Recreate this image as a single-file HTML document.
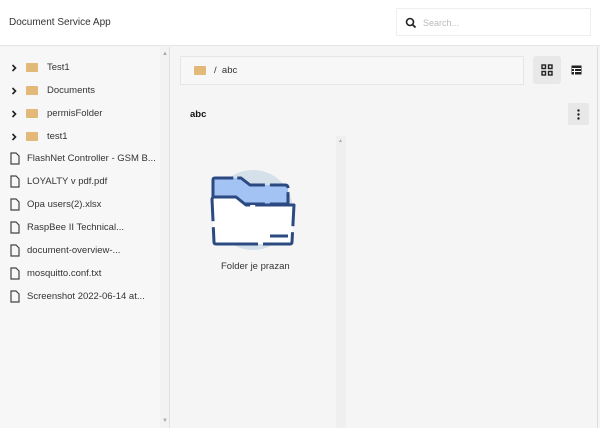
<!DOCTYPE html>
<html><head><style>
*{margin:0;padding:0;box-sizing:border-box}
body{width:600px;height:428px;overflow:hidden;font-family:"Liberation Sans",sans-serif;font-size:10px;color:#333;background:#f5f5f5;position:relative}
.hdr{position:absolute;left:0;top:0;width:600px;height:46px;background:#fff;border-bottom:1px solid #e4e4e4}
.title{position:absolute;left:9px;top:17px;font-size:10px;color:#333}
.search{position:absolute;left:396px;top:8px;width:195px;height:28px;border:1px solid #eee;background:#fff}
.search span{position:absolute;left:26px;top:9px;color:#bbb;font-size:9px}
.side{position:absolute;left:0;top:47px;width:160px;height:381px;background:#f7f7f7}
.sb{position:absolute;left:160px;top:47px;width:10px;height:381px;background:#f2f2f2;border-right:1px solid #e2e2e2}
.row{position:absolute;left:0;height:20px;font-size:9.5px;color:#333;white-space:nowrap}
.main{position:absolute;left:171px;top:47px;width:427px;height:381px;background:#f5f5f5;border-right:1px solid #ddd}
.bc{position:absolute;left:180px;top:56px;width:344px;height:29px;border:1px solid #e6e6e6;background:#f7f7f7}
.ch{position:absolute;left:11px;top:6px}
.fd{position:absolute;left:26px;top:5px;width:12px;height:9px;background:#e2b978;border-radius:1px}
</style></head><body>
<div class="hdr"><div class="title">Document Service App</div>
<div class="search"><svg style="position:absolute;left:8px;top:8px" width="12" height="12" viewBox="0 0 12 12"><circle cx="5" cy="5" r="3.5" fill="none" stroke="#222" stroke-width="1.6"/><path d="M7.5 7.5L10.5 10.5" stroke="#222" stroke-width="1.8"/></svg><span>Search...</span></div></div>
<div class="side">
<div class="row" style="top:11px"><svg class="ch" width="6" height="8"><path d="M1.5 1L4.5 4L1.5 7" fill="none" stroke="#222" stroke-width="1.6"/></svg><span class="fd"></span><span style="position:absolute;left:47px;top:4px">Test1</span></div>
<div class="row" style="top:34px"><svg class="ch" width="6" height="8"><path d="M1.5 1L4.5 4L1.5 7" fill="none" stroke="#222" stroke-width="1.6"/></svg><span class="fd"></span><span style="position:absolute;left:47px;top:4px">Documents</span></div>
<div class="row" style="top:57px"><svg class="ch" width="6" height="8"><path d="M1.5 1L4.5 4L1.5 7" fill="none" stroke="#222" stroke-width="1.6"/></svg><span class="fd"></span><span style="position:absolute;left:47px;top:4px">permisFolder</span></div>
<div class="row" style="top:80px"><svg class="ch" width="6" height="8"><path d="M1.5 1L4.5 4L1.5 7" fill="none" stroke="#222" stroke-width="1.6"/></svg><span class="fd"></span><span style="position:absolute;left:47px;top:4px">test1</span></div>
<div class="row" style="top:102px"><svg style="position:absolute;left:10px;top:3px" width="10" height="13"><path d="M1 1H6L9 4V12H1Z" fill="none" stroke="#444" stroke-width="1.2"/></svg><span style="position:absolute;left:27px;top:4px">FlashNet Controller - GSM B...</span></div>
<div class="row" style="top:125px"><svg style="position:absolute;left:10px;top:3px" width="10" height="13"><path d="M1 1H6L9 4V12H1Z" fill="none" stroke="#444" stroke-width="1.2"/></svg><span style="position:absolute;left:27px;top:4px">LOYALTY v pdf.pdf</span></div>
<div class="row" style="top:148px"><svg style="position:absolute;left:10px;top:3px" width="10" height="13"><path d="M1 1H6L9 4V12H1Z" fill="none" stroke="#444" stroke-width="1.2"/></svg><span style="position:absolute;left:27px;top:4px">Opa users(2).xlsx</span></div>
<div class="row" style="top:171px"><svg style="position:absolute;left:10px;top:3px" width="10" height="13"><path d="M1 1H6L9 4V12H1Z" fill="none" stroke="#444" stroke-width="1.2"/></svg><span style="position:absolute;left:27px;top:4px">RaspBee II Technical...</span></div>
<div class="row" style="top:194px"><svg style="position:absolute;left:10px;top:3px" width="10" height="13"><path d="M1 1H6L9 4V12H1Z" fill="none" stroke="#444" stroke-width="1.2"/></svg><span style="position:absolute;left:27px;top:4px">document-overview-...</span></div>
<div class="row" style="top:217px"><svg style="position:absolute;left:10px;top:3px" width="10" height="13"><path d="M1 1H6L9 4V12H1Z" fill="none" stroke="#444" stroke-width="1.2"/></svg><span style="position:absolute;left:27px;top:4px">mosquitto.conf.txt</span></div>
<div class="row" style="top:240px"><svg style="position:absolute;left:10px;top:3px" width="10" height="13"><path d="M1 1H6L9 4V12H1Z" fill="none" stroke="#444" stroke-width="1.2"/></svg><span style="position:absolute;left:27px;top:4px">Screenshot 2022-06-14 at...</span></div>
</div>
<div class="sb"><span style="position:absolute;left:2px;top:4px;font-size:6px;color:#aaa">▲</span><span style="position:absolute;left:2px;top:371px;font-size:6px;color:#aaa">▼</span></div>
<div class="main"></div>
<div class="bc"><span style="position:absolute;left:13px;top:9px;width:12px;height:9px;background:#e2b978;border-radius:1px"></span><span style="position:absolute;left:33px;top:8px;font-size:9.5px">/ &nbsp;abc</span></div>
<div style="position:absolute;left:533px;top:56px;width:28px;height:28px;background:#e8e8e8;border-radius:3px"><svg style="position:absolute;left:8px;top:8px" width="12" height="12"><g fill="none" stroke="#222" stroke-width="1.4"><rect x="1" y="1" width="3.5" height="3.5"/><rect x="7.5" y="1" width="3.5" height="3.5"/><rect x="1" y="7.5" width="3.5" height="3.5"/><rect x="7.5" y="7.5" width="3.5" height="3.5"/></g></svg></div>
<svg style="position:absolute;left:571px;top:65px" width="11" height="10"><rect x="0.5" y="0.5" width="10" height="9" fill="#222"/><g stroke="#fff" stroke-width="1"><path d="M1 3.5H10M1 6.5H10M3.5 3V10"/></g></svg>
<div style="position:absolute;left:190px;top:109px;font-size:9.5px;font-weight:bold;color:#111">abc</div>
<div style="position:absolute;left:568px;top:103px;width:21px;height:22px;background:#e8e8e8;border-radius:2px"><svg style="position:absolute;left:9px;top:6px" width="3" height="11"><circle cx="1.5" cy="1.5" r="1.2" fill="#222"/><circle cx="1.5" cy="5.5" r="1.2" fill="#222"/><circle cx="1.5" cy="9.5" r="1.2" fill="#222"/></svg></div>
<div style="position:absolute;left:336px;top:136px;width:10px;height:292px;background:#efefef"><span style="position:absolute;left:2px;top:2px;font-size:5px;color:#aaa">▲</span></div>
<svg style="position:absolute;left:208px;top:168px" width="90" height="84" viewBox="0 0 90 84">
<circle cx="45" cy="42" r="40" fill="#d6e0ea"/>
<path d="M7 10Q5 10 5 12V36H80V20Q80 17 77 17H42L33 10Z" fill="#a4c3f5" stroke="#2b4a82" stroke-width="3" stroke-linejoin="round" stroke-dasharray="20 5 30 4"/>
<path d="M5 29H28L38 37H86L84 74Q84 76 82 76H8Q6 76 6 74L4 31Z" fill="#fff" stroke="#2b4a82" stroke-width="3" stroke-linejoin="round" stroke-dasharray="40 5 60 6"/>
<path d="M62 68H80" stroke="#2b4a82" stroke-width="3"/>
</svg>
<div style="position:absolute;left:221px;top:261px;font-size:9.5px;color:#333">Folder je prazan</div>
</body></html>
